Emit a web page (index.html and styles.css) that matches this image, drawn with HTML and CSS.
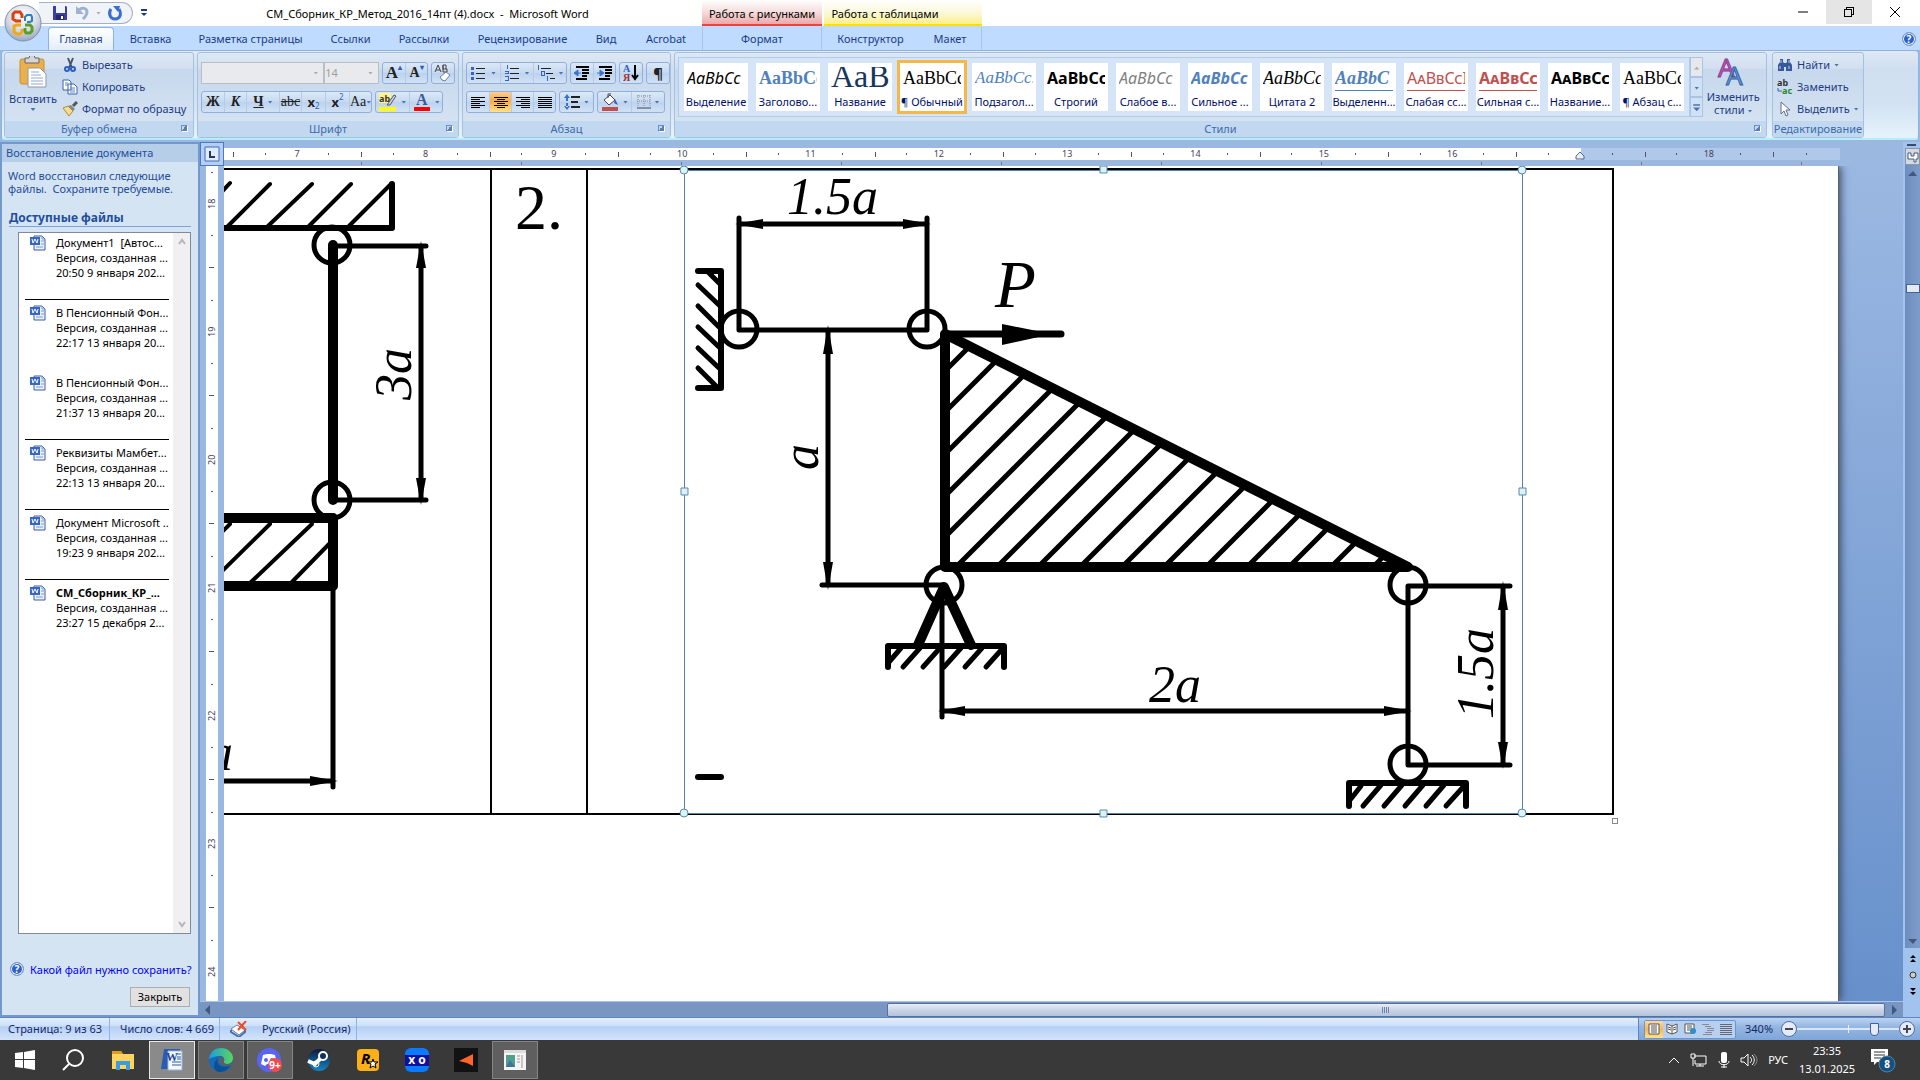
FILE: index.html
```html
<!DOCTYPE html>
<html lang="ru">

<head>
    <meta charset="UTF-8">
    <meta name="viewport" content="width=device-width, initial-scale=1.0">
    <title>СМ_Сборник_КР_Метод_2016_14пт (4).docx - Microsoft Word</title>
    <link rel="stylesheet" href="styles.css">
</head>

<body>
    <header class="titlebar">
        <button class="orb" aria-label="Office">
            <svg width="40" height="40" viewBox="0 0 40 40">
                <defs>
                    <radialGradient id="orbFill" cx="50%" cy="30%" r="70%">
                        <stop offset="0" stop-color="#ffffff" />
                        <stop offset="0.6" stop-color="#d5dbe6" />
                        <stop offset="1" stop-color="#9aa7bf" />
                    </radialGradient>
                </defs>
                <circle cx="20" cy="20" r="18" fill="url(#orbFill)" stroke="#8292b0" />
                <g fill="none" stroke-width="3">
                    <path d="M18 18h-5l-3-2v-5l2-2h5l2 3v3" stroke="#d8430f" />
                    <path d="M22 18v-4l2-2h4l1 2v4l-2 1h-3" stroke="#2b7fc4" stroke-width="2" />
                    <path d="M18 22h-4l-3 1v6l3 2h3l2-2v-3" stroke="#f0a818" />
                    <path d="M22 22h5l2 2v4l-2 2h-4l-1-2v-3" stroke="#5a9e28" stroke-width="3" />
                </g>
            </svg>
        </button>
        <div class="qat">
            <button aria-label="Сохранить"><svg width="16" height="16" viewBox="0 0 16 16"><path d="M1 1h13l1 1v13H1z" fill="#3a3fa8" /><path d="M4 1h9v7H4z" fill="#eef2fb" /><path d="M4 10h8v5H4z" fill="#222a70" /><path d="M9 11h2v3H9z" fill="#fff" /></svg></button>
            <button aria-label="Отменить"><svg width="16" height="16" viewBox="0 0 16 16"><path d="M5 5c3-3 8-2 8 2 0 3-2 5-4 7" fill="none" stroke="#9fb1d2" stroke-width="3" /><path d="M2 1v8h8z" fill="#9fb1d2" /></svg></button>
            <span class="caret pale"></span>
            <button aria-label="Повторить"><svg width="16" height="16" viewBox="0 0 16 16"><path d="M4 4c-3 4-1 10 4 10s7-5 4-10" fill="none" stroke="#3a6fd0" stroke-width="3" /><path d="M6 1h7l-2 6z" fill="#3a6fd0" /></svg></button>
        </div>
        <button class="qat-more" aria-label="Настройка панели"><svg width="6" height="8"><path d="M0 1h6" stroke="#1b3c84" stroke-width="2" /><path d="M0 4h6L3 7z" fill="#1b3c84" /></svg></button>
        <div class="window-title">СМ_Сборник_КР_Метод_2016_14пт (4).docx&nbsp; - &nbsp;Microsoft Word</div>
        <div class="context red">Работа с рисунками</div>
        <div class="context yellow">Работа с таблицами</div>
        <div class="window-buttons">
            <button aria-label="Свернуть"><svg width="12" height="12"><path d="M1 6h10" stroke="#000" /></svg></button>
            <button class="hover" aria-label="Восстановить"><svg width="12" height="12" viewBox="0 0 12 12" fill="none" stroke="#000" shape-rendering="crispEdges"><path d="M1.500 3.500h7v7h-7zM3.500 3V1.500h7v7H9" /></svg></button>
            <button aria-label="Закрыть окно"><svg width="12" height="12"><path d="M1 1l10 10M11 1L1 11" stroke="#000" /></svg></button>
        </div>
    </header>

    <nav class="tabs">
        <button class="tab active">Главная</button>
        <button class="tab">Вставка</button>
        <button class="tab">Разметка страницы</button>
        <button class="tab">Ссылки</button>
        <button class="tab">Рассылки</button>
        <button class="tab">Рецензирование</button>
        <button class="tab">Вид</button>
        <button class="tab">Acrobat</button>
        <button class="tab split">Формат</button>
        <button class="tab">Конструктор</button>
        <button class="tab last">Макет</button>
        <button class="help" aria-label="Справка"><span class="qmark">?</span></button>
    </nav>

    <section class="ribbon">
        <div class="group clipboard">
            <div class="group-body">
                <button class="big">
                    <svg width="28" height="32" viewBox="0 0 28 32"><rect x="1" y="3" width="24" height="25" rx="2" fill="#eab04c" stroke="#c98f35" /><path d="M6 2h4a3 3 0 0 1 6 0h4v5H6z" fill="#d5d5d5" stroke="#666" /><path d="M9 12h12l6 6v13H9z" fill="#fff" stroke="#8c99ad" /><path d="M12 16h8M12 19h10M12 22h12M12 25h12M12 28h12" stroke="#8fa9d0" /></svg>
                    <span>Вставить</span>
                    <i class="caret"></i>
                </button>
                <div class="small-list">
                    <button><svg width="16" height="16" viewBox="0 0 16 16"><path d="M6 1l4 10M11 1L7 11" stroke="#4a5568" stroke-width="2" /><circle cx="5" cy="12" r="2" fill="none" stroke="#2d5fc0" stroke-width="2" /><circle cx="11" cy="12" r="2" fill="none" stroke="#2d5fc0" stroke-width="2" /></svg>Вырезать</button>
                    <button><svg width="16" height="16" viewBox="0 0 16 16"><path d="M1 1h6l2 2v8H1zM6 5h6l3 3v7H6z" fill="#fff" stroke="#3a62a8" /><path d="M3 4h3M3 6h3M8 9h5M8 11h5M8 13h5" stroke="#5a86cc" /></svg>Копировать</button>
                    <button><svg width="16" height="16" viewBox="0 0 16 16"><path d="M1 7l5-2 5 5-4 5z" fill="#f3dd8c" stroke="#a98d3c" /><path d="M6 5l5 5 2-2-4-4z" fill="#888" /><path d="M11 5l4-4" stroke="#555" stroke-width="3" /></svg>Формат по образцу</button>
                </div>
            </div>
            <div class="group-label">Буфер обмена<i class="launcher"></i></div>
        </div>

        <div class="group font">
            <div class="group-body rows">
                <div class="row">
                    <label class="combo wide"><select aria-label="Шрифт" disabled><option></option></select><i class="caret pale"></i></label>
                    <label class="combo"><select aria-label="Размер" disabled><option>14</option></select><i class="caret pale"></i></label>
                    <div class="btns"><button class="serif grow">A<sup>▴</sup></button><button class="serif shrink">A<sup>▾</sup></button></div>
                    <div class="btns"><button aria-label="Очистить формат"><svg width="18" height="18" viewBox="0 0 18 18"><path d="M1 8L4 1l3 7M2 6h4M9 1v7h4V5H9V1h3v4" fill="none" stroke="#444" /><path d="M6 13l6-5 4 3-5 6-3-1z" fill="#fff" stroke="#6c7f9c" /></svg></button></div>
                </div>
                <div class="row">
                    <div class="btns">
                        <button class="serif"><b>Ж</b></button>
                        <button class="serif"><b><em>К</em></b></button>
                        <button class="serif wide"><b><u>Ч</u></b><i class="caret"></i></button>
                        <button class="serif"><s>abc</s></button>
                        <button class="script"><b>x</b><sub>2</sub></button>
                        <button class="script"><b>x</b><sup>2</sup></button>
                        <button class="serif">Aa<i class="caret"></i></button>
                    </div>
                    <div class="btns">
                        <button class="wide" aria-label="Цвет выделения"><svg width="18" height="18" viewBox="0 0 18 18"><path d="M0 0h12v10H0z" fill="#fff38a" /><text x="0" y="9" class="ico-text">ab</text><path d="M8 12l7-10 2 1-6 9z" fill="#c9d4e4" stroke="#556" /><path d="M0 14h17v4H0z" fill="#ff0" /></svg><i class="caret"></i></button>
                        <button class="wide" aria-label="Цвет текста"><svg width="18" height="18" viewBox="0 0 18 18"><text x="3" y="12" class="ico-a">A</text><path d="M1 14h16v4H1z" fill="#f00" /></svg><i class="caret"></i></button>
                    </div>
                </div>
            </div>
            <div class="group-label">Шрифт<i class="launcher"></i></div>
        </div>

        <div class="group para">
            <div class="group-body rows">
                <div class="row">
                    <div class="btns">
                        <button class="wide" aria-label="Маркеры"><svg width="16" height="16" shape-rendering="crispEdges"><path d="M5 3h9M5 8h9M5 13h9" stroke="#222" /><path d="M0 2h3v3H0zM0 7h3v3H0zM0 12h3v3H0z" fill="#3a62b8" /></svg><i class="caret"></i></button>
                        <button class="wide" aria-label="Нумерация"><svg width="16" height="16" shape-rendering="crispEdges"><path d="M5 3h9M5 8h9M5 13h9" stroke="#222" /><path d="M2 0v4M0 6h3v2H0M0 11h3v4H0" stroke="#3a62b8" fill="none" /></svg><i class="caret"></i></button>
                        <button class="wide" aria-label="Список"><svg width="18" height="16" shape-rendering="crispEdges"><path d="M4 3h10M9 8h7M13 13h5" stroke="#222" /><path d="M1 0v5M4 6h3v4H4zM10 11v5" stroke="#3a62b8" fill="none" /></svg><i class="caret"></i></button>
                    </div>
                    <div class="btns">
                        <button aria-label="Уменьшить отступ"><svg width="16" height="14"><path d="M2 1h13M8 4h7M8 7h7M8 10h5M2 13h11" stroke="#000" stroke-width="2" /><path d="M0 7l4-3v6zM3 7h4" fill="#3a72d0" stroke="#3a72d0" /></svg></button>
                        <button aria-label="Увеличить отступ"><svg width="16" height="14"><path d="M2 1h13M8 4h7M8 7h7M8 10h5M2 13h11" stroke="#000" stroke-width="2" /><path d="M7 7L3 4v6zM0 7h4" fill="#3a72d0" stroke="#3a72d0" /></svg></button>
                    </div>
                    <div class="btns"><button aria-label="Сортировка"><svg width="16" height="18"><text x="0" y="8" class="ico-sort">А</text><text x="0" y="17" class="ico-sort red">Я</text><path d="M12 1v14M9 11l3 4 3-4" fill="none" stroke="#000" stroke-width="2" /></svg></button></div>
                    <div class="btns"><button class="pilcrow">¶</button></div>
                </div>
                <div class="row">
                    <div class="btns">
                        <button aria-label="По левому краю"><svg width="14" height="14"><path d="M0 2h14M0 4h9M0 6h14M0 8h9M0 10h14M0 12h9" stroke="#000" shape-rendering="crispEdges" /></svg></button>
                        <button class="on" aria-label="По центру"><svg width="14" height="14"><path d="M0 2h14M3 4h8M0 6h14M3 8h8M0 10h14M3 12h8" stroke="#000" shape-rendering="crispEdges" /></svg></button>
                        <button aria-label="По правому краю"><svg width="14" height="14"><path d="M0 2h14M5 4h9M0 6h14M5 8h9M0 10h14M5 12h9" stroke="#000" shape-rendering="crispEdges" /></svg></button>
                        <button aria-label="По ширине"><svg width="14" height="14"><path d="M0 2h14M0 4h14M0 6h14M0 8h14M0 10h14M0 12h14" stroke="#000" shape-rendering="crispEdges" /></svg></button>
                    </div>
                    <div class="btns"><button class="wide" aria-label="Интервал"><svg width="16" height="16"><path d="M7 3h9M7 8h7M7 13h9" stroke="#222" stroke-width="2" /><path d="M3 0l3 4H0zM3 16l3-4H0zM2 4h2v3H2zM2 9h2v4H2z" fill="#3a72d0" /></svg><i class="caret"></i></button></div>
                    <div class="btns">
                        <button class="wide" aria-label="Заливка"><svg width="18" height="18"><path d="M3 7l6-5 5 5-6 5z" fill="#fff" stroke="#445" /><path d="M14 6l3 6-4-2z" fill="#2d5fc0" /><path d="M7 5V1h3" fill="none" stroke="#445" /><path d="M1 14h16v4H1z" fill="#c0504d" /></svg><i class="caret"></i></button>
                        <button class="wide" aria-label="Границы"><svg width="14" height="14"><path d="M0 1h14M0 6h14M1 0v12M7 0v12M13 0v12" stroke="#889" stroke-dasharray="1 1" /><path d="M0 13h14" stroke="#445" /></svg><i class="caret"></i></button>
                    </div>
                </div>
            </div>
            <div class="group-label">Абзац<i class="launcher"></i></div>
        </div>

        <div class="group styles">
            <div class="group-body">
                <div class="gallery">
                    <button class="style"><span class="sample emph">AaBbCc</span><span>Выделение</span></button>
                    <button class="style"><span class="sample head">AaBbCc</span><span>Заголово...</span></button>
                    <button class="style"><span class="sample title">AaB</span><span>Название</span></button>
                    <button class="style current"><span class="sample normal">AaBbCc</span><span>¶ Обычный</span></button>
                    <button class="style"><span class="sample subtitle">AaBbCc.</span><span>Подзагол...</span></button>
                    <button class="style"><span class="sample strong">AaBbCc</span><span>Строгий</span></button>
                    <button class="style"><span class="sample weak">AaBbCc</span><span>Слабое в...</span></button>
                    <button class="style"><span class="sample intense">AaBbCc</span><span>Сильное ...</span></button>
                    <button class="style"><span class="sample quote">AaBbCc</span><span>Цитата 2</span></button>
                    <button class="style"><span class="sample quote2">AaBbC</span><span>Выделенн...</span></button>
                    <button class="style"><span class="sample ref">AaBbCcI</span><span>Слабая сс...</span></button>
                    <button class="style"><span class="sample ref bold">AaBbCc</span><span>Сильная с...</span></button>
                    <button class="style"><span class="sample book">AaBbCc</span><span>Название...</span></button>
                    <button class="style"><span class="sample normal">AaBbCc</span><span>¶ Абзац с...</span></button>
                </div>
                <div class="gallery-scroll">
                    <button class="off" aria-label="Вверх"><i class="caret up pale"></i></button>
                    <button aria-label="Вниз"><i class="caret"></i></button>
                    <button aria-label="Все стили"><i class="caret bar"></i></button>
                </div>
                <button class="big change">
                    <svg width="32" height="30" viewBox="0 0 32 30"><text x="1" y="20" class="aa pink">A</text><text x="9" y="28" class="aa azure">A</text></svg>
                    <span>Изменить</span>
                    <span>стили <i class="caret"></i></span>
                </button>
            </div>
            <div class="group-label">Стили<i class="launcher"></i></div>
        </div>

        <div class="group edit">
            <div class="group-body">
                <div class="small-list">
                    <button><svg width="16" height="16" viewBox="0 0 16 16"><path d="M3 2h3v3l1 1h2l1-1V2h3v3l2 3v6H9v-4H7v4H1V8l2-3z" fill="#35599c" /><path d="M3 9v3M12 9v3M4 3v3M12 3v3" stroke="#c9daf2" /></svg>Найти <i class="caret"></i></button>
                    <button><svg width="16" height="16" viewBox="0 0 16 16"><text x="0" y="7" class="ico-text">ab</text><text x="5" y="15" class="ico-text green">ac</text><path d="M1 9v3h4" fill="none" stroke="#3a62b8" /></svg>Заменить</button>
                    <button><svg width="16" height="16" viewBox="0 0 16 16"><path d="M4 1v12l3-3 2 5 2-1-2-5h4z" fill="#fff" stroke="#5d6f8d" /></svg>Выделить <i class="caret"></i></button>
                </div>
            </div>
            <div class="group-label">Редактирование</div>
        </div>
    </section>

    <main class="workspace">
        <aside class="pane">
            <h2>Восстановление документа</h2>
            <p>Word восстановил следующие файлы.&nbsp; Сохраните требуемые.</p>
            <h3>Доступные файлы</h3>
            <div class="files">
                <ul>
                    <li><svg class="doc-icon" viewBox="0 0 16 16"><use href="#doc" /></svg><a href="#">Документ1&nbsp; [Автос...<br>Версия, созданная ...<br>20:50 9 января 202...</a></li>
                    <li class="line"><svg class="doc-icon" viewBox="0 0 16 16"><use href="#doc" /></svg><a href="#">В Пенсионный Фон... .<br>Версия, созданная ...<br>22:17 13 января 20...</a></li>
                    <li><svg class="doc-icon" viewBox="0 0 16 16"><use href="#doc" /></svg><a href="#">В Пенсионный Фон... .<br>Версия, созданная ...<br>21:37 13 января 20...</a></li>
                    <li class="line"><svg class="doc-icon" viewBox="0 0 16 16"><use href="#doc" /></svg><a href="#">Реквизиты Мамбет...<br>Версия, созданная ...<br>22:13 13 января 20...</a></li>
                    <li class="line"><svg class="doc-icon" viewBox="0 0 16 16"><use href="#doc" /></svg><a href="#">Документ Microsoft ...<br>Версия, созданная ...<br>19:23 9 января 202...</a></li>
                    <li class="line"><svg class="doc-icon" viewBox="0 0 16 16"><use href="#doc" /></svg><a href="#"><b>СМ_Сборник_КР_...</b><br>Версия, созданная ...<br>23:27 15 декабря 2...</a></li>
                </ul>
                <div class="files-scroll">
                    <svg width="8" height="8"><path d="M1 6l3-4 3 4" fill="none" stroke="#b5b5b5" stroke-width="2" /></svg>
                    <svg width="8" height="8"><path d="M1 2l3 4 3-4" fill="none" stroke="#b5b5b5" stroke-width="2" /></svg>
                </div>
            </div>
            <a class="which" href="#"><span class="qmark">?</span>Какой файл нужно сохранить?</a>
            <button class="close">Закрыть</button>
        </aside>

        <section class="editor">
            <div class="corner"><svg width="16" height="16"><path d="M1 1h14v14H1z" fill="#dfeafa" stroke="#3c6bc4" /><path d="M6 5v6h5" fill="none" stroke="#26385c" stroke-width="2" /></svg></div>
            <div class="hruler">
                <div class="scale">
                    <span>7</span><span>8</span><span>9</span><span>10</span><span>11</span><span>12</span><span>13</span><span>14</span><span>15</span><span>16</span><span class="edge"><svg width="10" height="9"><path d="M1 8V5l4-4 4 4v3z" fill="#e8eef8" stroke="#54698c" /></svg></span><span>18</span><span class="tail"></span>
                </div>
                <div class="stops"></div>
            </div>
            <div class="vruler">
                <div class="vscale">
                    <span>18</span><span>19</span><span>20</span><span>21</span><span>22</span><span>23</span><span>24</span>
                </div>
            </div>
            <div class="canvas">
                <div class="page">
                    <table>
                        <tr>
                            <td class="prev">
                                <svg class="drawing" width="266" height="643" viewBox="224 170 266 643">
                                    <g class="ln">
                                        <path d="M220 228H392V184" class="w6" />
                                        <path d="M230 183L190 226M270 184L228 226M312 184L268 226M351 184L309 226M391 184L349 226" class="w4" />
                                        <circle cx="332" cy="245" r="18" />
                                        <circle cx="332" cy="500" r="18" />
                                        <path d="M333 246H426M333 500H426M421 246V500M333 586V787M220 781H333" />
                                        <path d="M333 245V500M220 518H333V586H220" class="w10" />
                                        <path d="M230 524L218 536M270 524L210 583M312 524L250 583M330 543L291 583" class="w4" />
                                    </g>
                                    <path class="arrow" d="M421 241l5 27h-10zM421 505l5-27h-10zM338 781l-28 5v-10z" />
                                    <text class="dim" transform="translate(411 400) rotate(-90)">3a</text>
                                    <text class="dim" x="233" y="770" text-anchor="end">a</text>
                                </svg>
                            </td>
                            <td class="num">2.</td>
                            <td class="pic">
                                <svg class="drawing selected" width="1024" height="643" viewBox="588 170 1024 643">
                                    <defs>
                                        <clipPath id="plate"><path d="M946 334V566H1408z" /></clipPath>
                                    </defs>
                                    <g class="ln">
                                        <path d="M739 218V330H927V218M739 224H927M828 330V585M822 585H944M942 590V717M942 711H1408M1510 586H1408V765H1510M1503 586V765" />
                                        <path d="M698 271H721V388H698M888 667V646H1004V667M1349 806V783H1466V806M698 777H721" class="w6" />
                                        <path d="M708 272L720 284M698 285L719 305M698 306L719 327M698 327L719 347M698 348L719 368M698 368L717 387" />
                                        <path d="M889 662L901 648M903 667L920 648M923 667L940 648M944 667L961 648M965 667L982 648M986 667L1003 648" />
                                        <path d="M1350 800L1361 786M1363 806L1381 785M1384 806L1402 785M1405 806L1423 785M1426 806L1444 785M1446 806L1465 785" />
                                        <circle cx="739" cy="329" r="18" />
                                        <circle cx="927" cy="329" r="18" />
                                        <circle cx="944" cy="585" r="18" />
                                        <circle cx="1408" cy="585" r="18" />
                                        <circle cx="1408" cy="764" r="18" />
                                        <path clip-path="url(#plate)" d="M750 566L986 330M791 566L1027 330M833 566L1069 330M875 566L1111 330M916 566L1152 330M957 566L1193 330M998 566L1234 330M1039 566L1275 330M1081 566L1317 330M1123 566L1359 330M1165 566L1401 330M1207 566L1443 330M1248 566L1484 330M1290 566L1526 330M1332 566L1568 330M1374 566L1610 330" />
                                        <path d="M945 334V567H1408zM918 645L944 587L971 645" class="w10" />
                                        <path d="M945 334H1061" class="w7" />
                                    </g>
                                    <path class="arrow" d="M735 224l28-5v10zM931 224l-28-5v10zM828 325l5 29h-10zM828 590l5-28h-10zM938 711l27-5v10zM1412 711l-28-5v10zM1503 581l5 29h-10zM1503 769l5-27h-10zM1002 324l50 10-50 11z" />
                                    <text class="dim" x="787" y="214">1.5a</text>
                                    <text class="dim" x="1149" y="702">2a</text>
                                    <text class="dim" transform="translate(818 470) rotate(-90)">a</text>
                                    <text class="dim" transform="translate(1493 719) rotate(-90)">1.5a</text>
                                    <text class="force" x="995" y="307">P</text>
                                    <rect x="684" y="170" width="838" height="643" class="frame" />
                                    <g class="handle">
                                        <circle cx="684" cy="170" r="4" />
                                        <circle cx="1522" cy="170" r="4" />
                                        <circle cx="684" cy="813" r="4" />
                                        <circle cx="1522" cy="813" r="4" />
                                        <path d="M1100 166h7v7h-7zM1100 810h7v7h-7zM681 488h7v7h-7zM1519 488h7v7h-7z" />
                                    </g>
                                </svg>
                            </td>
                        </tr>
                    </table>
                    <div class="row-end"></div>
                </div>
            </div>
            <div class="hscroll">
                <svg width="6" height="10"><path d="M5 0v10L0 5z" fill="#40587f" /></svg>
                <div class="hthumb"><i></i></div>
                <svg width="6" height="10"><path d="M1 0v10l5-5z" fill="#40587f" /></svg>
            </div>
        </section>

        <div class="vscroll">
            <div class="splitter"></div>
            <button class="ruler-toggle" aria-label="Линейка"><svg width="12" height="12"><path d="M1 2h3v3h3V2h4v6H9v3H7V8H1z" fill="#fff" stroke="#475a7c" /></svg></button>
            <div class="vtrack">
                <svg width="9" height="5"><path d="M0 5h9L5 0z" fill="#40587f" /></svg>
                <div class="vthumb"></div>
                <svg class="down" width="9" height="5"><path d="M0 0h9L5 5z" fill="#40587f" /></svg>
            </div>
            <div class="browse">
                <svg width="6" height="7"><path d="M0 3l3-3 3 3zM0 7l3-3 3 3z" fill="#000" /></svg>
                <svg width="8" height="8"><circle cx="4" cy="4" r="3" fill="#ccc" stroke="#333" /></svg>
                <svg width="6" height="7"><path d="M0 0l3 3 3-3zM0 4l3 3 3-3z" fill="#000" /></svg>
            </div>
        </div>
    </main>

    <footer class="status">
        <span class="cell first">Страница: 9 из 63</span>
        <span class="cell">Число слов: 4 669</span>
        <span class="cell lang"><svg width="18" height="16" viewBox="0 0 18 16"><path d="M1 8l6-4 8 5-6 5z" fill="#fff" stroke="#6d7f9f" /><path d="M1 9v2l8 5 6-5V9" fill="none" stroke="#4a70b0" stroke-width="2" /><path d="M8 1l8 8M16 0L8 9" stroke="#f04a24" stroke-width="2" /></svg>Русский (Россия)</span>
        <div class="zoom">
            <div class="views">
                <button class="on" aria-label="Разметка"><svg width="12" height="12"><path d="M1 1h10v10H1z" fill="#fff" stroke="#555" /><path d="M3 3h6M3 5h6M3 7h6M3 9h6" stroke="#555" /></svg></button>
                <button aria-label="Чтение"><svg width="12" height="12"><path d="M1 1l5 2 5-2v8l-5 2-5-2zM6 3v8M2 4l3 1M2 6l3 1M7 5l3-1M7 7l3-1" fill="#fff" stroke="#555" /></svg></button>
                <button aria-label="Веб"><svg width="13" height="12"><path d="M1 1h9v9H1z" fill="#fff" stroke="#555" /><path d="M3 3h5M3 5h5M3 7h3" stroke="#555" /><circle cx="9" cy="8" r="3" fill="#2f8fc0" /></svg></button>
                <button aria-label="Структура"><svg width="12" height="12" shape-rendering="crispEdges"><path d="M0 1h7M3 3h6M5 5h7M5 7h7M3 9h7M1 11h9" stroke="#889" /></svg></button>
                <button aria-label="Черновик"><svg width="12" height="12" shape-rendering="crispEdges"><path d="M0 1h12M0 3h12M0 5h12M0 7h12M0 9h12M0 11h12" stroke="#667" /></svg></button>
            </div>
            <span class="percent">340%</span>
            <button class="round" aria-label="Мельче"><svg width="8" height="8"><path d="M0 4h8" stroke="#445" stroke-width="2" /></svg></button>
            <input type="range" min="0" max="100" value="79" aria-label="Масштаб">
            <button class="round" aria-label="Крупнее"><svg width="8" height="8"><path d="M0 4h8M4 0v8" stroke="#445" stroke-width="2" /></svg></button>
        </div>
    </footer>

    <div class="taskbar">
        <button aria-label="Пуск"><svg width="20" height="20"><path d="M0 3l8-1v7H0zM9 2l11-2v9H9zM0 10h8v8l-8-1zM9 10h11v10L9 18z" fill="#fff" /></svg></button>
        <button aria-label="Поиск"><svg width="24" height="24"><circle cx="13" cy="10" r="8" fill="none" stroke="#fff" stroke-width="2" /><path d="M7 16l-6 6" stroke="#fff" stroke-width="2" /></svg></button>
        <button aria-label="Проводник"><svg width="22" height="20"><path d="M0 1h9l2 3h11v15H0z" fill="#ffd35c" /><path d="M0 1h9l2 3H0z" fill="#e19a1b" /><path d="M4 20v-9h14v9h-4v-5H8v5z" fill="#3b9de0" /></svg></button>
        <button class="open current" aria-label="Word"><svg width="24" height="24"><path d="M4 1h16l-3 20H1z" fill="#2b5cb0" /><path d="M8 3h14v19H8z" fill="#f4f8ff" stroke="#9bb3dc" /><path d="M12 14h9M12 17h9M17 6h4M17 9h4M17 11h4" stroke="#2b5cb0" /><text x="6" y="13" class="w-text">W</text></svg></button>
        <button class="open" aria-label="Edge"><svg width="26" height="26" viewBox="0 0 26 26"><defs><linearGradient id="edgeTop"><stop offset="0" stop-color="#1d9be0" /><stop offset="1" stop-color="#5bd65a" /></linearGradient></defs><circle cx="13" cy="13" r="12" fill="#1668b8" /><path d="M1 12C2 4 8 1 13 1c7 0 12 5 12 10 0 4-3 6-6 6-2 0-4-1-3-3 1-3-1-5-4-5-5 0-9 2-11 3z" fill="url(#edgeTop)" /><path d="M10 11c-2 5 1 11 12 8-3 5-8 6-11 6-6-1-7-9-1-14z" fill="#0d4f94" /><path d="M12 10c-2 3-1 6 2 8 4 2 7 1 9 0 2-1 3-2 3-1v-4c-1 3-4 4-7 4-2 0-4-1-3-3 1-2-1-4-4-4z" fill="#5f5f5f" /></svg></button>
        <button class="open" aria-label="Discord"><svg width="28" height="26"><circle cx="13" cy="13" r="12" fill="#5865f2" /><path d="M7 8l4-1h4l4 1 2 9-4 2-2-2h-4l-2 2-4-2z" fill="#fff" /><circle cx="10" cy="13" r="2" fill="#5865f2" /><circle cx="16" cy="13" r="2" fill="#5865f2" /><circle cx="19" cy="18" r="7" fill="#f04a50" /><text x="19" y="22" text-anchor="middle" class="badge">9+</text></svg></button>
        <button aria-label="Steam"><svg width="24" height="24"><defs><linearGradient id="steam" x2="0" y2="1"><stop offset="0" stop-color="#10183c" /><stop offset="1" stop-color="#1586c4" /></linearGradient></defs><circle cx="12" cy="12" r="11" fill="url(#steam)" /><path d="M1 13l7 3 6-6" fill="none" stroke="#fff" stroke-width="4" /><circle cx="16" cy="8" r="4" fill="#10305c" stroke="#fff" stroke-width="2" /><circle cx="9" cy="16" r="3" fill="none" stroke="#fff" /></svg></button>
        <button aria-label="Rockstar"><svg width="24" height="24"><rect x="1" y="1" width="22" height="22" rx="4" fill="#fcaf17" /><text x="5" y="16" class="rstar">R</text><path d="M17 11l1 3h4l-3 2 1 4-3-2-3 2 1-4-3-2h4z" fill="#fff" stroke="#000" /></svg></button>
        <button aria-label="XO"><svg width="24" height="24"><rect width="24" height="24" rx="6" fill="#0a7bff" /><path d="M0 7h24v11H0z" fill="#1010a0" /><text x="12" y="16" text-anchor="middle" class="xo">x o</text></svg></button>
        <button aria-label="Faceit"><svg width="24" height="24"><path d="M0 0h24v24H0z" fill="#121212" /><path d="M19 6v12l-6-3-8-2z" fill="#ff6428" /></svg></button>
        <button class="open" aria-label="Приложение"><svg width="22" height="20"><path d="M0 0h22v20H0z" fill="#f4f4f4" /><path d="M0 0h22v3H0z" fill="#dcdcdc" /><path d="M2 5h9v12H2z" fill="#4f9f8c" /><path d="M2 17l4-7 5 7z" fill="#3d74a0" /><path d="M13 6h3M13 9h3M13 12h3M18 5v13" stroke="#999" /></svg></button>
        <div class="tray">
            <svg width="12" height="8"><path d="M1 7l5-5 5 5" fill="none" stroke="#fff" /></svg>
            <svg width="18" height="14"><path d="M4 3h12v8H5V7M10 11v2M6 13h8M1 1h4v4H1zM3 5v8" fill="none" stroke="#fff" /></svg>
            <svg width="12" height="16"><rect x="3" width="6" height="11" rx="2" fill="#fff" /><path d="M1 9c0 5 10 5 10 0M6 12v4M3 15h6" fill="none" stroke="#fff" /></svg>
            <svg width="18" height="14"><path d="M1 5h3l4-4v12L4 9H1zM10 4c2 2 2 4 0 6M12 2c3 3 3 7 0 10" fill="none" stroke="#fff" /><path d="M14 1c4 4 4 8 0 12" fill="none" stroke="#888" /></svg>
            <span class="lang-code">РУС</span>
            <time>23:35<br>13.01.2025</time>
            <svg width="25" height="26"><path d="M0 2h17v13H6l-3 3v-3H0z" fill="#fff" /><path d="M3 5h11M3 8h11M3 11h7" stroke="#333" /><circle cx="16" cy="17" r="8" fill="#16507f" stroke="#4c83ac" /><text x="16" y="21" text-anchor="middle" class="badge">8</text></svg>
        </div>
    </div>

    <svg class="sprite">
        <symbol id="doc" viewBox="0 0 16 16">
            <path d="M4 1h8l3 3v11H4z" fill="#eaf1fd" stroke="#3d5f9e" />
            <path d="M12 1v3h3M6 12h7M11 6h3M11 9h3" fill="none" stroke="#7d9bd0" />
            <path d="M0 2h10v8H0z" fill="#3767c4" />
            <path d="M2 4l1 4 2-4 2 4 1-4" fill="none" stroke="#fff" />
        </symbol>
    </svg>
</body>

</html>
```
FILE: styles.css
```css
* {
    box-sizing: border-box;
}

body {
    margin: 0;
    height: 100vh;
    display: flex;
    flex-direction: column;
    overflow: hidden;
    font-family: "Noto Sans", "Open Sans", sans-serif;
    font-size: 11px;
    line-height: 16px;
    color: #1b3c84;
    background: #9bb8e0;
}

button {
    font: inherit;
    color: inherit;
    background: none;
    border: 0;
    padding: 0;
    white-space: nowrap;
}

svg {
    display: block;
    flex-shrink: 0;
}

a {
    color: inherit;
    text-decoration: none;
}

.sprite {
    display: none;
}

.caret {
    display: inline-block;
    width: 5px;
    height: 3px;
    background: #4a74b0;
    clip-path: polygon(0 0, 100% 0, 50% 100%);
    vertical-align: middle;
    flex-shrink: 0;
}

.caret.pale {
    background: #a8acb4;
}

.caret.up {
    clip-path: polygon(50% 0, 100% 100%, 0 100%);
}

.caret.bar {
    height: 7px;
    width: 7px;
    clip-path: polygon(0 0, 100% 0, 100% 20%, 0 20%, 0 45%, 100% 45%, 50% 100%, 0 45%);
}

.qmark {
    width: 14px;
    height: 14px;
    border-radius: 50%;
    border: 1px solid #7f9cc8;
    background: #2b62c8;
    box-shadow: inset 0 0 0 1px #fff;
    color: #fff;
    font-size: 10px;
    font-weight: bold;
    line-height: 12px;
    text-align: center;
}

/* title bar */
.titlebar {
    position: relative;
    display: flex;
    align-items: stretch;
    height: 26px;
    background: #fff;
    color: #000;
}

.orb {
    position: absolute;
    left: 3px;
    top: 3px;
    z-index: 2;
}

.qat {
    display: flex;
    align-items: center;
    gap: 6px;
    width: 94px;
    height: 22px;
    margin: 2px 0 0 39px;
    padding-left: 13px;
    background: #f0f3f8;
    border: 1px solid #a9b1c0;
    border-left: 0;
    border-radius: 0 11px 11px 0;
}

.qat-more {
    width: 20px;
    padding-left: 8px;
}

.window-title {
    width: 549px;
    line-height: 28px;
    text-align: center;
    white-space: nowrap;
}

.context {
    width: 120px;
    line-height: 28px;
    text-align: center;
    white-space: nowrap;
}

.context.red {
    background: linear-gradient(#fff, #f5dada 50%, #eda8a8 92%, #f04040 92%);
}

.context.yellow {
    width: 158px;
    margin-left: 2px;
    padding-right: 36px;
    background: linear-gradient(#fff, #fbf8d8 50%, #fbf088 92%, #ffe000 92%);
}

.window-buttons {
    display: flex;
    height: 24px;
    margin-left: auto;
    margin-right: 2px;
}

.window-buttons button {
    width: 46px;
    display: grid;
    place-items: center;
}

.window-buttons .hover {
    background: #e5e5e5;
}

/* ribbon tabs */
.tabs {
    display: grid;
    grid-template-columns: 70px 69px 131px 69px 78px 119px 48px 72px 120px 97px 63px 1fr;
    height: 24px;
    padding: 1px 4px 0 46px;
    background: #bfdbff;
}

.tab.active {
    margin: 0 2px;
    border: 1px solid #8db2e3;
    border-bottom: 0;
    border-radius: 4px 4px 0 0;
    background: linear-gradient(#fff, #e3edf8);
}

.tab.split {
    border: 1px solid #a8c4ea;
    border-width: 0 1px;
}

.tab.last {
    border-right: 1px solid #a8c4ea;
}

.help {
    justify-self: end;
}

.help .qmark {
    display: block;
}

/* ribbon */
.ribbon {
    display: flex;
    gap: 3px;
    height: 90px;
    margin: 0 1px;
    padding: 1px 2px 0;
    border: 1px solid #8db2e3;
    border-bottom: 2px solid #b5eef8;
    border-radius: 4px;
    background: linear-gradient(#dfe9f5, #cfdff0 20%, #d3e2f2 60%, #e4f3fb);
}

.group {
    display: flex;
    flex-direction: column;
    border: 1px solid #a5c1de;
    border-radius: 3px;
    background: linear-gradient(#dee8f5, #d3e0f0 18%, #c7d8ed 20%, #d8e5f3);
    overflow: hidden;
}

.group-body {
    display: flex;
    flex: 1;
    padding: 1px 3px 0;
}

.group-body.rows {
    flex-direction: column;
    gap: 7px;
    padding: 9px 3px 0;
}

.group-label {
    position: relative;
    height: 16px;
    background: #c1d8f0;
    color: #3e6aaa;
    text-align: center;
    white-space: nowrap;
}

.launcher {
    position: absolute;
    right: 5px;
    top: 4px;
    width: 7px;
    height: 7px;
    border: 1px solid #6d8fbe;
    border-right-color: #fff;
    border-bottom-color: #fff;
    background: linear-gradient(135deg, transparent 40%, #5a7fb4 40%);
}

.clipboard {
    width: 190px;
}

.font {
    width: 262px;
}

.para {
    width: 209px;
}

.styles {
    flex: 1;
    margin-right: 2px;
}

.edit {
    width: 92px;
    margin-right: 52px;
}

.big {
    display: flex;
    flex-direction: column;
    align-items: center;
    width: 50px;
    padding-top: 2px;
}

.big > .caret {
    margin-top: 1px;
}

.big svg {
    margin-bottom: 3px;
}

.small-list {
    display: flex;
    flex-direction: column;
    padding-left: 4px;
}

.small-list button {
    display: flex;
    align-items: center;
    gap: 4px;
    height: 22px;
}

.edit .small-list {
    padding-left: 1px;
}

.row {
    display: flex;
    gap: 3px;
}

.combo {
    display: flex;
    align-items: center;
    width: 55px;
    height: 22px;
    border: 1px solid #b8bec8;
    background: #e8eaee;
    padding-right: 5px;
}

.combo.wide {
    width: 124px;
    margin-right: -3px;
}

.combo select {
    flex: 1;
    min-width: 0;
    appearance: none;
    border: 0;
    background: none;
    font: inherit;
    color: #a0a0a0;
    opacity: 1;
}

.btns {
    display: flex;
    height: 22px;
    border: 1px solid #8fb0dc;
    border-radius: 3px;
    background: linear-gradient(#dce8f6, #c6d9f0 50%, #bcd2ee 52%, #d2e2f5);
    color: #222;
}

.btns button {
    display: flex;
    align-items: center;
    justify-content: center;
    min-width: 22px;
}

.btns button + button {
    border-left: 1px solid #b5cbe8;
}

.btns .wide {
    min-width: 33px;
    gap: 4px;
}

.btns .on {
    background: linear-gradient(#fbcf90, #fda945 45%, #fde38c);
}

.btns .serif {
    font-family: "Liberation Serif", serif;
    font-size: 14px;
}

.btns .script {
    min-width: 24px;
    font-size: 13px;
}

.btns .grow {
    font-size: 17px;
    font-weight: bold;
}

.btns .shrink {
    font-weight: bold;
}

.btns sub,
.btns sup {
    font-size: 8px;
    color: #2d5fc0;
}

.btns sup {
    align-self: flex-start;
    line-height: 10px;
}

.btns sub {
    align-self: flex-end;
    line-height: 12px;
}

.pilcrow {
    font-size: 15px;
    font-weight: bold;
}

.ico-text {
    font: bold 9px "Noto Sans", sans-serif;
    fill: #333;
}

.ico-text.green {
    fill: #1d8a2c;
}

.ico-a {
    font: bold 16px "Liberation Serif", serif;
    fill: #3a5a9c;
}

.ico-sort {
    font: bold 10px "Liberation Serif", serif;
    fill: #2d5fc0;
}

.ico-sort.red {
    fill: #a03030;
}

.styles .group-body {
    padding: 4px 3px 0;
}

.gallery {
    display: flex;
    flex: 1;
    gap: 8px;
    padding: 5px 5px;
    height: 60px;
    background: #d5e5f7;
    border: 1px solid #b1cbea;
}

.style {
    display: flex;
    flex-direction: column;
    align-items: center;
    flex-shrink: 0;
    width: 64px;
    height: 48px;
    padding: 4px 0 0;
    background: #fff;
    color: #00106c;
    overflow: hidden;
}

.style.current {
    outline: 3px solid #f4b848;
    outline-offset: 0;
}

.sample {
    display: block;
    width: 58px;
    height: 24px;
    margin-bottom: 3px;
    overflow: hidden;
    font-size: 16px;
    line-height: 23px;
    text-align: left;
    color: #000;
}

.emph,
.weak,
.intense,
.quote,
.quote2,
.subtitle {
    font-style: italic;
}

.head,
.quote2,
.intense,
.strong,
.book {
    font-weight: bold;
}

.head,
.intense,
.quote2,
.subtitle {
    color: #4f81bd;
}

.title,
.head,
.subtitle,
.normal,
.quote,
.quote2 {
    font-family: "Liberation Serif", serif;
    font-size: 18px;
    line-height: 22px;
}

.title {
    font-size: 32px;
    line-height: 18px;
    color: #17365d;
}

.subtitle {
    font-size: 17px;
}

.weak {
    color: #808080;
}

.quote2 {
    border-bottom: 1px solid #4f81bd;
}

.ref {
    font-variant: small-caps;
    color: #c0504d;
    border-bottom: 1px solid #c0504d;
}

.ref.bold {
    font-weight: bold;
}

.book {
    font-variant: small-caps;
}

.gallery-scroll {
    display: flex;
    flex-direction: column;
    width: 14px;
    height: 60px;
}

.gallery-scroll button {
    flex: 1;
    border: 1px solid #a9c4e6;
    background: #d0e1f6;
    line-height: 8px;
}

.gallery-scroll .off {
    background: #e6e8ec;
}

.change {
    width: 62px;
    padding: 0;
}

.change svg {
    margin-bottom: 3px;
}

.change span {
    line-height: 13px;
}

.aa {
    font: 26px "Noto Sans", sans-serif;
    stroke-width: 1px;
}

.pink {
    fill: #c85ac0;
    stroke: #8a3a90;
}

.azure {
    fill: #6ba2e6;
    stroke: #34609f;
}

/* recovery pane */
.workspace {
    display: flex;
    flex: 1;
    min-height: 0;
    padding-top: 2px;
    border-bottom: 1px solid #5c87c4;
}

.pane {
    display: flex;
    flex-direction: column;
    width: 200px;
    border: 2px solid #7399cc;
    background: #d5e4f3;
    color: #1f4e9c;
}

.pane h2 {
    margin: 0;
    padding: 1px 4px 0;
    height: 18px;
    background: #b7cee9;
    font-size: 11px;
    font-weight: normal;
    white-space: nowrap;
}

.pane p {
    margin: 7px 6px 0;
    line-height: 13px;
}

.pane h3 {
    margin: 15px 7px 0;
    border-bottom: 1px solid #7da2dc;
    font-size: 12px;
    line-height: 16px;
}

.files {
    display: flex;
    flex: 1;
    margin: 5px 7px 0 16px;
    border: 1px solid #7f8b98;
    background: #fff;
    color: #000;
    line-height: 15px;
}

.files ul {
    flex: 1;
    min-width: 0;
    margin: 0;
    padding: 0 0 0 6px;
    list-style: none;
}

.files li {
    display: flex;
    gap: 10px;
    height: 70px;
    padding: 5px 0 0 5px;
    white-space: nowrap;
    overflow: hidden;
    border-top: 1px solid transparent;
}

.files li:first-child {
    height: 66px;
    padding-top: 1px;
}

.files .line {
    border-top-color: #000;
}

.doc-icon {
    width: 16px;
    height: 16px;
}

.files-scroll {
    display: flex;
    flex-direction: column;
    justify-content: space-between;
    align-items: center;
    width: 17px;
    margin-left: 4px;
    padding: 5px 0;
    background: #f0f0f0;
}

.which {
    display: flex;
    gap: 6px;
    margin: 28px 0 9px 8px;
    line-height: 16px;
    color: #00f;
    white-space: nowrap;
}

.close {
    align-self: flex-end;
    width: 60px;
    height: 20px;
    margin: 0 8px 8px 0;
    border: 1px solid #adadad;
    background: #e1e1e1;
    color: #000;
}

/* editor */
.editor {
    display: grid;
    grid-template-columns: 24px 1fr;
    grid-template-rows: 24px 1fr 16px;
    flex: 1;
    min-width: 0;
    background: #9bb8e0;
}

.corner {
    display: grid;
    place-items: center;
    border: 1px solid #4a78cc;
    background: #b6cff0;
}

.hruler {
    padding: 6px 63px 0 0;
}

.scale {
    display: grid;
    grid-template-columns: repeat(12, 1fr) 67px;
    height: 12px;
    padding-left: 9px;
    background: linear-gradient(to right, #fff 84%, #b0c8e9 84%);
}

.scale span,
.scale .tail {
    background:
        linear-gradient(#556, #556) 0 50% / 1px 5px no-repeat,
        linear-gradient(#556, #556) 25% 50% / 1px 2px no-repeat,
        linear-gradient(#556, #556) 75% 50% / 1px 2px no-repeat;
    text-align: center;
    font-size: 9px;
    line-height: 12px;
    color: #445;
}

.scale .tail {
    background:
        linear-gradient(#556, #556) 0 50% / 1px 5px no-repeat,
        linear-gradient(#556, #556) 50% 50% / 1px 2px no-repeat;
}

.edge svg {
    margin: 3px auto 0;
}

.stops {
    height: 3px;
    margin: 2px 0 0 137px;
    background: repeating-linear-gradient(to right, #777 0 1px, transparent 1px 160px);
}

.vruler {
    margin: 0 6px;
    background: #fff;
    overflow: hidden;
}

.vscale {
    display: grid;
    grid-auto-rows: 128px;
    margin-top: -26px;
    height: 0;
}

.vscale span {
    writing-mode: vertical-rl;
    transform: rotate(180deg);
    background:
        linear-gradient(#556, #556) 50% 0 / 5px 1px no-repeat,
        linear-gradient(#556, #556) 50% 25% / 2px 1px no-repeat,
        linear-gradient(#556, #556) 50% 75% / 2px 1px no-repeat;
    text-align: center;
    font-size: 9px;
    line-height: 12px;
    color: #445;
}

.canvas {
    min-width: 0;
    min-height: 0;
    overflow: hidden;
    padding-right: 64px;
    background: linear-gradient(#9bb8e2, #6790cb);
}

.page {
    height: 100%;
    padding-top: 2px;
    background: #fff;
    border-right: 1px solid #56616e;
    box-shadow: 2px 0 8px #3c4c66;
}

.page table {
    border-spacing: 0;
    border: 2px solid #000;
    border-width: 2px 0;
}

.page td {
    padding: 0;
    border-right: 2px solid #000;
    vertical-align: top;
    color: #000;
}

.page .num {
    width: 96px;
    padding-top: 2px;
    text-align: center;
    font-family: "Liberation Serif", serif;
    font-size: 64px;
    line-height: 72px;
}

.selected {
    overflow: visible;
}

.ln {
    fill: none;
    stroke: #000;
    stroke-width: 5px;
    stroke-linecap: round;
    stroke-linejoin: round;
}

.w4 {
    stroke-width: 4px;
}

.w6 {
    stroke-width: 6px;
}

.w7 {
    stroke-width: 7px;
}

.w10 {
    stroke-width: 10px;
}

.arrow {
    fill: #000;
}

.dim {
    font: italic 52px "Liberation Serif", serif;
}

.force {
    font: italic 67px "Liberation Serif", serif;
}

.frame {
    fill: none;
    stroke: #5580b0;
    shape-rendering: crispEdges;
}

.handle {
    fill: #d8f4f6;
    stroke: #5f87a8;
}

.row-end {
    width: 6px;
    height: 6px;
    margin: 3px 0 0 1388px;
    border: 1px solid #888;
}

.hscroll {
    grid-column: 1 / -1;
    display: flex;
    align-items: center;
    padding: 0 6px 0 5px;
    border-top: 1px solid #a5c3ee;
    background: #7896c1;
}

.hthumb {
    display: grid;
    place-items: center;
    width: 59%;
    height: 14px;
    margin: 0 6px 0 auto;
    border: 1px solid #56719e;
    border-radius: 2px;
    background: linear-gradient(#e8edf6, #c9d4e6 50%, #b3c3dc);
}

.hthumb i {
    width: 8px;
    height: 6px;
    background: repeating-linear-gradient(to right, #6d83a8 0 1px, transparent 1px 2px);
}

.vscroll {
    display: flex;
    flex-direction: column;
    width: 17px;
    padding-left: 2px;
    background: #a3c3ef;
}

.splitter {
    height: 2px;
    width: 9px;
    margin: 2px 0 2px 2px;
    background: #3b4a68;
}

.ruler-toggle {
    display: grid;
    place-items: center;
    width: 15px;
    height: 17px;
    border: 1px solid #8b97a8;
    background: #d4d8e0;
}

.vtrack {
    display: flex;
    flex: 1;
    flex-direction: column;
    align-items: center;
    padding: 6px 0 4px;
    background: linear-gradient(to right, #6d8ebd, #7d9cc9);
}

.vthumb {
    width: 14px;
    height: 9px;
    margin-top: 108px;
    border: 1px solid #47619c;
    background: #e4e9f2;
}

.down {
    margin-top: auto;
}

.browse {
    display: flex;
    flex-direction: column;
    align-items: center;
    gap: 9px;
    height: 69px;
    padding-top: 7px;
}

/* status bar */
.status {
    display: flex;
    align-items: stretch;
    height: 22px;
    background: linear-gradient(#e2eefe, #cde0fa 35%, #b5d0f5 40%, #d3e4fb);
    color: #15286a;
    line-height: 22px;
}

.cell {
    width: 110px;
    padding-left: 10px;
    border-right: 1px solid #8db2e3;
    white-space: nowrap;
}

.cell.first {
    padding-left: 8px;
}

.cell.lang {
    display: flex;
    align-items: center;
    gap: 14px;
    width: 137px;
}

.zoom {
    display: flex;
    align-items: center;
    width: 282px;
    margin-left: auto;
    padding: 0 5px;
    border-left: 1px solid #5c87c4;
    background: linear-gradient(#bcd3f2, #94b6e3 40%, #7fa5d8);
}

.views {
    display: flex;
    border: 1px solid #6c95cf;
    border-radius: 2px;
    background: #b8d0f0;
}

.views button {
    display: grid;
    place-items: center;
    width: 18px;
    height: 17px;
}

.views .on {
    background: linear-gradient(#fbd9a0, #fdb54d 50%, #fde38c);
}

.percent {
    width: 45px;
    padding-left: 9px;
}

.round {
    display: grid;
    place-items: center;
    width: 16px;
    height: 16px;
    border: 1px solid #4f6fa0;
    border-radius: 50%;
    background: #e4ebf6;
}

.zoom input {
    flex: 1;
    min-width: 0;
    height: 16px;
    margin: 0;
    appearance: none;
    background:
        linear-gradient(#e8f0fb, #e8f0fb) 50% 50% / 1px 8px no-repeat,
        linear-gradient(#dbe7f8, #dbe7f8) 0 50% / 100% 2px no-repeat;
}

.zoom input::-webkit-slider-thumb {
    appearance: none;
    width: 9px;
    height: 13px;
    border: 1px solid #3f639c;
    border-radius: 1px 1px 5px 5px;
    background: #e4ebf6;
}

/* taskbar */
.taskbar {
    display: flex;
    gap: 3px;
    height: 40px;
    padding: 1px 24px 1px 2px;
    background: #393939;
    color: #fff;
}

.taskbar button {
    display: grid;
    place-items: center;
    width: 46px;
}

.taskbar .open {
    border: 1px solid #858585;
    background: #5f5f5f;
}

.taskbar .current {
    border-color: #e8e8e8;
    background: #8a8a8a;
}

.w-text {
    font: bold 12px "Liberation Serif", serif;
    fill: #1f4a9c;
}

.badge {
    font: bold 10px "Noto Sans", sans-serif;
    fill: #fff;
}

.rstar {
    font: italic bold 15px "Noto Sans", sans-serif;
}

.xo {
    font: bold 12px "Noto Sans", sans-serif;
    fill: #fff;
}

.tray {
    display: flex;
    align-items: center;
    gap: 10px;
    margin-left: auto;
}

time {
    width: 58px;
    margin-right: 5px;
    text-align: center;
    line-height: 18px;
}
```
